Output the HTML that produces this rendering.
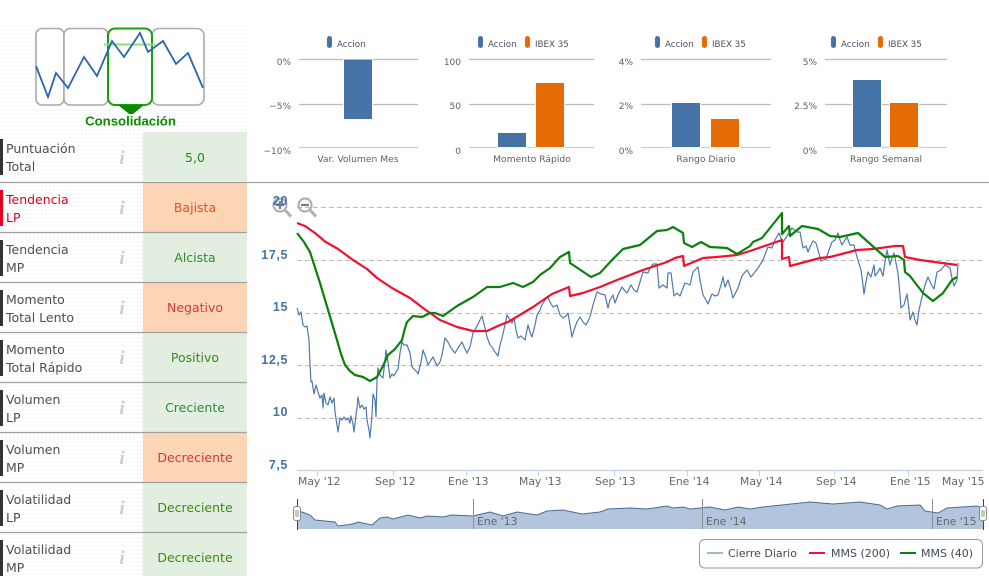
<!DOCTYPE html>
<html><head><meta charset="utf-8">
<style>
html,body{margin:0;padding:0;background:#fff;width:989px;height:576px;overflow:hidden}
svg{display:block;font-family:"DejaVu Sans","Liberation Sans",sans-serif}
.lb{font-size:12.5px;fill:#4d4d55}
.lr{font-size:12.5px;fill:#e2001a}
.v{font-size:12.5px;text-anchor:middle}
.i{font-family:"Liberation Serif",serif;font-style:italic;font-weight:bold;font-size:19px;fill:#ccc;text-anchor:middle}
.s{font-size:8.7px;fill:#4a5060}
.ya{font-size:9px;fill:#5f5f5f;text-anchor:end}
.t{font-size:9.2px;fill:#5f5f5f;text-anchor:middle}
.y{font-size:12.5px;fill:#4572a7;text-anchor:end;font-weight:bold;font-family:"Liberation Sans",sans-serif;letter-spacing:.6px}
.x{font-size:10.8px;fill:#666}
.n{font-size:10.8px;fill:#666}
.g{stroke:#bbb;stroke-width:1.2}
.a{stroke:#c0d0e0;stroke-width:1.2}
.d{stroke:#bdbdbd;stroke-width:1;stroke-dasharray:5 3}
</style></head><body>
<svg width="989" height="576" viewBox="0 0 989 576" xmlns="http://www.w3.org/2000/svg">
<defs><pattern id="dots" width="4" height="4" patternUnits="userSpaceOnUse"><rect x="1" y="1" width="2" height="2" fill="#f8f8f8"/></pattern></defs>
<rect x="0" y="23" width="247" height="553" fill="url(#dots)"/>

<!-- logo -->
<g fill="none" stroke="#aaa" stroke-width="1.6">
<rect x="36" y="28.5" width="28" height="76.5" rx="6" fill="#fff"/>
<rect x="64" y="28.5" width="44" height="76.5" rx="6" fill="#fff"/>
<rect x="152" y="28.5" width="52" height="76.5" rx="7" fill="#fff"/>
</g>
<rect x="108" y="28.5" width="44" height="76.5" rx="7" fill="#fff" stroke="#16a00c" stroke-width="2"/>
<path d="M104 44.5H155" stroke="#8fdc80" stroke-width="2"/>
<polyline points="36,66 48,97 56,73 68,88 84,57 97,76 112,41 124,57 140,33 148,52 163,41 176,64 188,53 203,88" fill="none" stroke="#2a64b0" stroke-width="1.8"/>
<path d="M118 105H144L133 114H129Z" fill="#0c8a00"/>
<text x="130.5" y="125.5" text-anchor="middle" style="font-family:'Liberation Sans',sans-serif;font-weight:bold;font-size:13.2px" fill="#0c8a00">Consolidación</text>

<!-- rows -->
<g>
<rect x="143" y="132" width="104" height="49" fill="#e2efe0"/>
<rect x="143" y="183" width="104" height="49" fill="#fdd4b4"/>
<rect x="143" y="233" width="104" height="49" fill="#e2efe0"/>
<rect x="143" y="283" width="104" height="49" fill="#fdd4b4"/>
<rect x="143" y="333" width="104" height="49" fill="#e2efe0"/>
<rect x="143" y="383" width="104" height="49" fill="#e2efe0"/>
<rect x="143" y="433" width="104" height="49" fill="#fdd4b4"/>
<rect x="143" y="483" width="104" height="49" fill="#e2efe0"/>
<rect x="143" y="533" width="104" height="43" fill="#e2efe0"/>
<rect x="0" y="139" width="3" height="36" fill="#333"/>
<rect x="0" y="190" width="3" height="36" fill="#e2001a"/>
<rect x="0" y="240" width="3" height="36" fill="#333"/>
<rect x="0" y="290" width="3" height="36" fill="#333"/>
<rect x="0" y="340" width="3" height="36" fill="#333"/>
<rect x="0" y="390" width="3" height="36" fill="#333"/>
<rect x="0" y="440" width="3" height="36" fill="#333"/>
<rect x="0" y="490" width="3" height="36" fill="#333"/>
<rect x="0" y="540" width="3" height="36" fill="#333"/>
</g>
<g stroke="#a0a0a0" stroke-width="1.2">
<path d="M0 232.5H247M0 282.5H247M0 332.5H247M0 382.5H247M0 432.5H247M0 482.5H247M0 532.5H247"/>
<path d="M0 182.5H989"/>
</g>
<text class="lb" x="6" y="153">Puntuación</text><text class="lb" x="6" y="171">Total</text>
<text class="lr" x="6" y="204">Tendencia</text><text class="lr" x="6" y="222">LP</text>
<text class="lb" x="6" y="254">Tendencia</text><text class="lb" x="6" y="272">MP</text>
<text class="lb" x="6" y="304">Momento</text><text class="lb" x="6" y="322">Total Lento</text>
<text class="lb" x="6" y="354">Momento</text><text class="lb" x="6" y="372">Total Rápido</text>
<text class="lb" x="6" y="404">Volumen</text><text class="lb" x="6" y="422">LP</text>
<text class="lb" x="6" y="454">Volumen</text><text class="lb" x="6" y="472">MP</text>
<text class="lb" x="6" y="504">Volatilidad</text><text class="lb" x="6" y="522">LP</text>
<text class="lb" x="6" y="554">Volatilidad</text><text class="lb" x="6" y="572">MP</text>
<text class="i" x="122" y="164">i</text><text class="i" x="122" y="214">i</text><text class="i" x="122" y="264">i</text><text class="i" x="122" y="314">i</text><text class="i" x="122" y="364">i</text><text class="i" x="122" y="414">i</text><text class="i" x="122" y="464">i</text><text class="i" x="122" y="514">i</text><text class="i" x="122" y="564">i</text>
<text class="v" x="195" y="162" fill="#1f8a2a">5,0</text>
<text class="v" x="195" y="212" fill="#d9542b">Bajista</text>
<text class="v" x="195" y="262" fill="#2e8b2e">Alcista</text>
<text class="v" x="195" y="312" fill="#d03a40">Negativo</text>
<text class="v" x="195" y="362" fill="#3a8a20">Positivo</text>
<text class="v" x="195" y="412" fill="#2a8a3a">Creciente</text>
<text class="v" x="195" y="462" fill="#d03a30">Decreciente</text>
<text class="v" x="195" y="512" fill="#3a8a10">Decreciente</text>
<text class="v" x="195" y="562" fill="#3a8a10">Decreciente</text>

<!-- bar chart 1 -->
<rect x="327" y="36" width="5" height="12" rx="2.5" fill="#4572a7"/><text class="s" x="337" y="47">Accion</text>
<path class="g" d="M299 59.5H418M299 104.5H418"/><path class="a" d="M299 147.5H418"/>
<rect x="343.5" y="59" width="29" height="60.5" fill="#4572a7" stroke="#fff"/>
<text class="ya" x="291" y="65">0%</text><text class="ya" x="291" y="109">−5%</text><text class="ya" x="291" y="154">−10%</text>
<text class="t" x="358" y="162">Var. Volumen Mes</text>

<!-- bar chart 2 -->
<rect x="478" y="36" width="5" height="12" rx="2.5" fill="#4572a7"/><text class="s" x="488" y="47">Accion</text>
<rect x="525" y="36" width="5" height="12" rx="2.5" fill="#e46b05"/><text class="s" x="535" y="47">IBEX 35</text>
<path class="g" d="M469 59.5H594M469 104.5H594"/><path class="a" d="M469 147.5H594"/>
<rect x="497.5" y="132.5" width="29" height="15" fill="#4572a7" stroke="#fff"/>
<rect x="535.5" y="82.5" width="29" height="65" fill="#e46b05" stroke="#fff"/>
<text class="ya" x="461" y="65">100</text><text class="ya" x="461" y="109">50</text><text class="ya" x="461" y="154">0</text>
<text class="t" x="532" y="162">Momento Rápido</text>

<!-- bar chart 3 -->
<rect x="655" y="36" width="5" height="12" rx="2.5" fill="#4572a7"/><text class="s" x="665" y="47">Accion</text>
<rect x="702" y="36" width="5" height="12" rx="2.5" fill="#e46b05"/><text class="s" x="712" y="47">IBEX 35</text>
<path class="g" d="M641 59.5H771M641 104.5H771"/><path class="a" d="M641 147.5H771"/>
<rect x="671.5" y="102.5" width="29" height="45" fill="#4572a7" stroke="#fff"/>
<rect x="710.5" y="118.5" width="29" height="29" fill="#e46b05" stroke="#fff"/>
<text class="ya" x="633" y="65">4%</text><text class="ya" x="633" y="109">2%</text><text class="ya" x="633" y="154">0%</text>
<text class="t" x="706" y="162">Rango Diario</text>

<!-- bar chart 4 -->
<rect x="831" y="36" width="5" height="12" rx="2.5" fill="#4572a7"/><text class="s" x="841" y="47">Accion</text>
<rect x="878" y="36" width="5" height="12" rx="2.5" fill="#e46b05"/><text class="s" x="888" y="47">IBEX 35</text>
<path class="g" d="M825 59.5H947M825 104.5H947"/><path class="a" d="M825 147.5H947"/>
<rect x="852.5" y="79.5" width="29" height="68" fill="#4572a7" stroke="#fff"/>
<rect x="889.5" y="102.5" width="29" height="45" fill="#e46b05" stroke="#fff"/>
<text class="ya" x="817" y="65">5%</text><text class="ya" x="817" y="109">2.5%</text><text class="ya" x="817" y="154">0%</text>
<text class="t" x="886" y="162">Rango Semanal</text>

<!-- main chart -->
<path class="d" d="M297 207.5H983M297 260.5H983M297 313.5H983M297 365.5H983M297 418.5H983"/>
<path d="M297 470.5H983" stroke="#c0d0e0" stroke-width="1.2"/>
<path stroke="#c0d0e0" stroke-width="1" d="M317.5 470V476M393.5 470V476M466.5 470V476M538.5 470V476M614.5 470V476M687.5 470V476M759.5 470V476M834.5 470V476M908.5 470V476"/>
<text class="y" x="288" y="259">17,5</text><text class="y" x="288" y="311">15</text><text class="y" x="288" y="364">12,5</text><text class="y" x="288" y="416">10</text><text class="y" x="288" y="469">7,5</text>
<text class="x" x="298" y="485">May '12</text><text class="x" x="375" y="485">Sep '12</text><text class="x" x="448" y="485">Ene '13</text><text class="x" x="519" y="485">May '13</text><text class="x" x="595" y="485">Sep '13</text><text class="x" x="669" y="485">Ene '14</text><text class="x" x="740" y="485">May '14</text><text class="x" x="816" y="485">Sep '14</text><text class="x" x="890" y="485">Ene '15</text><text class="x" x="942" y="485">May '15</text>
<!-- blue series -->
<polyline fill="none" stroke="#4f78ab" stroke-width="1.2" stroke-linejoin="round" points="297,308 299,315 301,312 303,325 305,327 307,326 309,340 310,365 311,382 312,381 314,394 316,385 318,392 320,398 322,395 323,408 324,393 326,403 328,405 330,397 332,403 334,398 335,412 337,425 338,432 340,418 342,420 344,417 346,420 348,418 350,423 351,416 353,424 354,432 356,415 357,408 358,397 360,408 362,405 364,409 366,407 367,420 369,430 370,438 372,415 373,394 375,400 376,417 377,380 378,368 380,375 383,378 385,360 386,350 388,362 390,378 392,374 394,376 396,372 398,369 400,353 402,342 404,345 407,345 410,353 412,367 415,370 417,372 418,374 421,362 423,350 426,358 428,365 431,360 433,357 437,366 440,362 442,355 445,338 448,342 451,348 455,353 458,348 462,342 465,349 467,353 470,347 473,333 476,328 479,322 482,316 485,328 487,337 490,345 492,347 495,352 498,356 500,345 502,338 505,325 507,315 510,320 512,323 514,318 516,330 518,338 521,336 525,340 527,330 528,325 530,332 532,337 535,325 537,315 540,310 542,305 545,300 548,297 550,302 553,307 557,305 560,315 563,318 566,316 568,313 570,325 572,337 575,327 577,322 580,317 583,322 586,325 590,317 593,305 597,292 601,294 605,295 608,308 610,300 613,295 615,303 618,295 622,287 625,291 627,293 631,285 634,290 637,292 640,282 643,272 648,273 650,268 653,264 657,264 659,288 663,285 667,288 668,273 671,273 674,296 677,293 680,296 683,288 685,283 690,285 693,272 698,267 700,280 703,295 706,300 708,304 712,294 715,296 718,295 721,285 723,277 725,287 728,280 731,290 733,298 738,288 742,276 745,272 747,270 751,277 755,272 758,268 763,260 766,252 768,247 772,248 775,240 779,233 781,238 783,242 787,236 792,228 797,232 800,232 803,248 806,246 808,252 811,245 813,241 816,243 818,250 821,261 826,259 829,250 832,242 835,240 838,233 840,240 842,245 845,240 847,237 850,245 854,245 857,257 861,270 863,285 864,294 866,282 868,272 871,277 874,265 875,276 878,272 880,268 883,276 885,262 887,250 890,265 892,258 894,253 896,263 898,273 900,295 901,308 904,305 907,294 909,310 910,320 913,312 915,320 917,325 919,310 922,297 925,285 928,277 931,284 934,289 937,272 941,270 945,265 950,268 952,278 954,286 957,280 958,263"/>
<!-- red -->
<polyline fill="none" stroke="#f01030" stroke-width="2.2" stroke-linejoin="round" points="297,223 305,226 315,233 325,241.5 338,249 353,260 367,269 377,278 392,288 410,298 423,308 440,320 457,327 473,331 487,331 500,325 508,322 533,307 552,294 569,287 570,296 583,293 600,287 617,280 643,270 667,262 675,258 683,256 684,266 703,258 717,257 737,255 750,251 782,240 782,259 789,257 790,266 820,258 830,257 857,250 873,249 895,246 903,246 905,257 920,260 957,265"/>
<!-- green -->
<polyline fill="none" stroke="#0a820a" stroke-width="2.2" stroke-linejoin="round" points="297,233 304,242 310,252 320,283 337,340 341,354 345,365 350,371 355,375 363,377 370,381 377,377 383,366 388,355 395,349 402,340 405,328 407,322 413,316 422,317 430,313 435,313 443,316 457,306 473,297 487,287 500,287 513,283 523,287 533,282 540,275 550,268 560,257 569,252 570,263 591,277 600,273 612,260 623,249 640,245 657,231 667,230 673,227 683,233 684,243 692,247 701,242 710,247 727,248 737,254 750,246 753,242 762,238 782,213 782,234 789,226 790,236 802,226 818,229 830,236 840,237 858,233 877,250 885,257 898,256 904,260 905,272 910,276 923,293 933,301 943,293 952,280 957,277"/>

<!-- zoom icons -->
<g fill="none" stroke="#b0b0b0">
<circle cx="280" cy="205" r="6.5" stroke-width="2.2"/><path d="M285 210L291 216.5" stroke-width="3"/>
<circle cx="305" cy="205" r="6.5" stroke-width="2.2"/><path d="M310 210L316 216.5" stroke-width="3"/>
</g>
<path d="M276 205H284M280 201V209M301 205H309" stroke="#6d7f93" stroke-width="2.2"/>
<text class="y" x="288" y="205">20</text>

<!-- navigator -->
<polygon fill="#b3c5dc" points="297,529 297,511 302,512 310,515 315,520 335,522 338,526 353,524 358,522 372,525 380,518 387,517 393,519 408,515 420,518 427,516 443,517 452,515 473,516 490,512 503,516 517,512 537,515 547,511 563,510 582,514 600,512 608,509 630,508 647,509 667,506 673,508 683,507 690,509 710,507 725,510 738,507 750,509 763,507 810,502 833,504 860,502 880,505 887,509 897,506 920,505 925,511 938,513 947,508 977,506 983,508 983,529"/>
<polyline fill="none" stroke="#4a6a96" stroke-width="1" points="297,511 302,512 310,515 315,520 335,522 338,526 353,524 358,522 372,525 380,518 387,517 393,519 408,515 420,518 427,516 443,517 452,515 473,516 490,512 503,516 517,512 537,515 547,511 563,510 582,514 600,512 608,509 630,508 647,509 667,506 673,508 683,507 690,509 710,507 725,510 738,507 750,509 763,507 810,502 833,504 860,502 880,505 887,509 897,506 920,505 925,511 938,513 947,508 977,506 983,508"/>
<path d="M473.5 499V529M702.5 499V529M932.5 499V529" stroke="#8a8f96" stroke-width="1"/>
<text class="n" x="477" y="525">Ene '13</text><text class="n" x="706" y="525">Ene '14</text><text class="n" x="936" y="525">Ene '15</text>
<path d="M297.5 499V530M983.5 499V530" stroke="#444" stroke-width="1"/>
<g fill="#fff" stroke="#888"><rect x="293.5" y="506.5" width="7" height="14" rx="2.5"/><rect x="979.5" y="506.5" width="7" height="14" rx="2.5"/></g>
<path d="M296 510V517M298 510V517M982 510V517M984 510V517" stroke="#777" stroke-width=".8"/>

<!-- legend -->
<rect x="699.5" y="539.5" width="283" height="28.5" rx="5" fill="#fff" stroke="#999"/>
<path d="M707 553H723" stroke="#a0b8d4" stroke-width="2"/>
<path d="M809 553H825" stroke="#f01030" stroke-width="2"/>
<path d="M900 553H916" stroke="#0a820a" stroke-width="2"/>
<g font-size="11" fill="#3f4a5a"><text x="728" y="557">Cierre Diario</text><text x="831" y="557">MMS (200)</text><text x="921" y="557">MMS (40)</text></g>
</svg>
</body></html>
